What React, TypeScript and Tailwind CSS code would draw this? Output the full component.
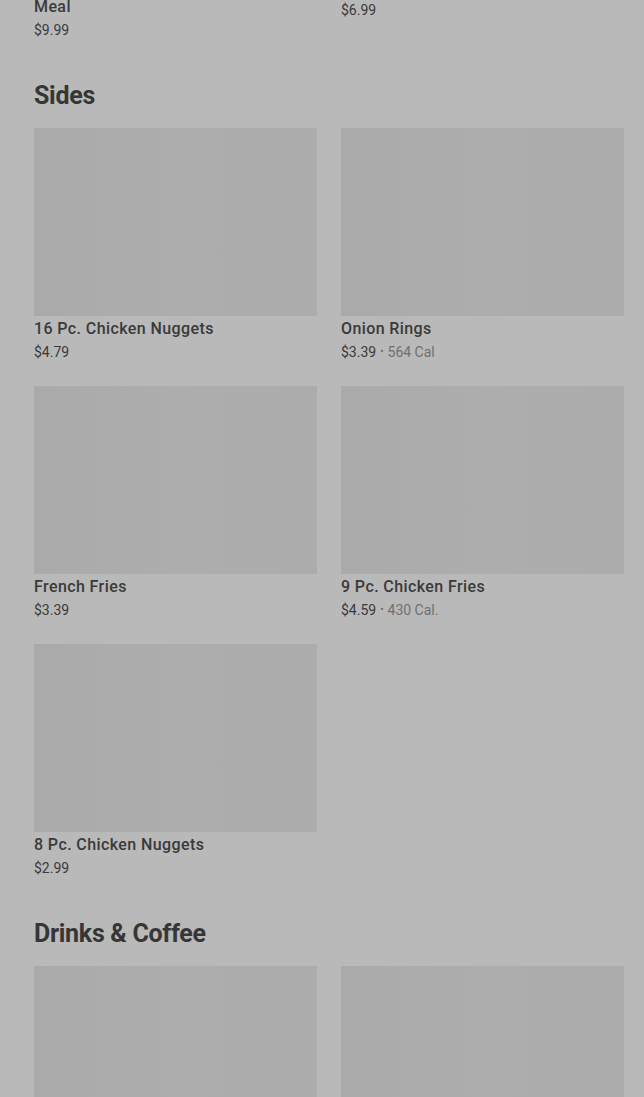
type Item = {
  name: string[];
  price: string;
  cal?: string;
};

const prev: Item[] = [
  { name: ['Bacon King Sandwich', 'Meal'], price: '$9.99' },
  { name: ['Whopper Jr. Sandwich'], price: '$6.99' },
];

const sides: Item[] = [
  { name: ['16 Pc. Chicken Nuggets'], price: '$4.79' },
  { name: ['Onion Rings'], price: '$3.39', cal: '564 Cal' },
  { name: ['French Fries'], price: '$3.39' },
  { name: ['9 Pc. Chicken Fries'], price: '$4.59', cal: '430 Cal.' },
  { name: ['8 Pc. Chicken Nuggets'], price: '$2.99' },
];

const drinks: Item[] = [
  { name: ['Coca-Cola'], price: '$2.49' },
  { name: ['Iced Coffee'], price: '$2.99' },
];

function Card({ item }: { item: Item }) {
  return (
    <div className="flex flex-col">
      <div className="h-[188px] bg-gradient-to-r from-[#aaaaaa] via-[#adadad] to-[#acacac]" />
      <div className="mt-[3px] text-base leading-5 font-medium tracking-[0.4px] text-[#3a3a3a]">
        {item.name.map((line) => (
          <div key={line}>{line}</div>
        ))}
      </div>
      <div className="mt-[3px] flex h-5 items-center text-sm leading-5 text-[#3a3a3a]">
        <span>{item.price}</span>
        {item.cal && (
          <>
            <span className="mx-1 text-[10px] leading-none text-[#6e6e6e]">•</span>
            <span className="text-[#707070]">{item.cal}</span>
          </>
        )}
      </div>
    </div>
  );
}

function Section({ title, items }: { title: string; items: Item[] }) {
  return (
    <section className="mt-10">
      <h2 className="text-[25px] leading-8 font-bold tracking-[-0.3px] text-[#363636]">{title}</h2>
      <div className="mt-4 grid grid-cols-2 gap-6">
        {items.map((it) => (
          <Card key={it.name[0]} item={it} />
        ))}
      </div>
    </section>
  );
}

export default function App() {
  return (
    <div
      className="h-[1097px] overflow-hidden bg-[#b9b9b9] pl-[34px] pr-[20px]"
      style={{ fontFamily: 'Roboto, "Liberation Sans", sans-serif' }}
    >
      <div className="-mt-[214px] grid grid-cols-2 gap-6">
        {prev.map((it) => (
          <Card key={it.name[0]} item={it} />
        ))}
      </div>
      <Section title="Sides" items={sides} />
      <Section title="Drinks & Coffee" items={drinks} />
    </div>
  );
}
